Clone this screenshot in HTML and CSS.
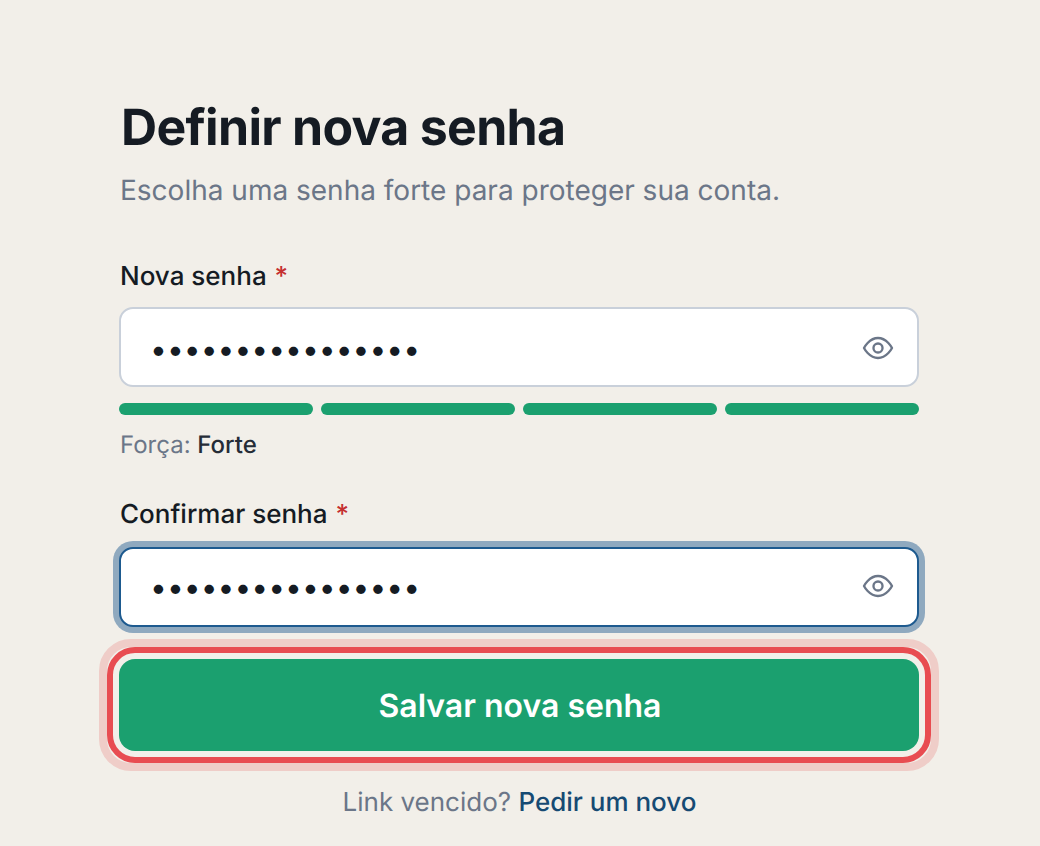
FILE: index.html
```html
<!DOCTYPE html>
<html lang="pt-BR">
<head>
<meta charset="utf-8">
<title>Definir nova senha</title>
<link rel="stylesheet" href="styles.css">
</head>
<body>
<main class="card">
  <h1 class="title">Definir nova senha</h1>
  <p class="subtitle">Escolha uma senha forte para proteger sua conta.</p>
  <form class="form">
    <div class="field field-first">
      <label class="label" for="nova">Nova senha <span class="req">*</span></label>
      <div class="input-wrap">
        <input class="input input-rest" id="nova" type="password" value="abcdefghijklmnop">
        <button class="eye eye-rest" type="button" aria-label="Mostrar senha">
          <svg viewBox="0 0 24 24" width="32" height="32" fill="none" stroke="currentColor" stroke-width="1.75" stroke-linecap="round" stroke-linejoin="round"><path d="M1.5 12s3.8-7.5 10.5-7.5 10.5 7.5 10.5 7.5-3.8 7.5-10.5 7.5S1.5 12 1.5 12z"/><circle cx="12" cy="12" r="3.4"/></svg>
        </button>
      </div>
      <div class="meter"><span></span><span></span><span></span><span></span></div>
      <p class="strength">Força: <strong>Forte</strong></p>
    </div>
    <div class="field field-second">
      <label class="label label-second" for="conf">Confirmar senha <span class="req">*</span></label>
      <div class="input-wrap">
        <input class="input input-focus" id="conf" type="password" value="abcdefghijklmnop">
        <button class="eye eye-focus" type="button" aria-label="Mostrar senha">
          <svg viewBox="0 0 24 24" width="32" height="32" fill="none" stroke="currentColor" stroke-width="1.75" stroke-linecap="round" stroke-linejoin="round"><path d="M1.5 12s3.8-7.5 10.5-7.5 10.5 7.5 10.5 7.5-3.8 7.5-10.5 7.5S1.5 12 1.5 12z"/><circle cx="12" cy="12" r="3.4"/></svg>
        </button>
      </div>
    </div>
    <button class="submit" type="button">Salvar nova senha</button>
  </form>
  <p class="foot">Link vencido? <a href="#">Pedir um novo</a></p>
</main>
</body>
</html>
```

FILE: styles.css
```css
* { box-sizing: border-box; }
html, body { margin: 0; height: 100%; }
body {
  background: #f2efe9;
  color: #151b23;
  font-family: Inter, "Liberation Sans", sans-serif;
  text-rendering: geometricPrecision;
  overflow: hidden;
}
.card { width: 800px; margin-left: 119px; padding-top: 98px; }
.title {
  margin: 0;
  padding-left: 2px;
  font-size: 50px;
  line-height: 60px;
  font-weight: 700;
  letter-spacing: -0.7px;
  color: #151b23;
}
.subtitle {
  margin: 14px 0 0;
  padding-left: 1px;
  font-size: 28px;
  line-height: 36px;
  color: #6b7688;
}
.form { display: flex; flex-direction: column; }
.field-first { margin-top: 52px; }
.field-second { margin-top: 37px; }
.label {
  display: block;
  padding-left: 1px;
  font-size: 26px;
  line-height: 34px;
  font-weight: 450;
  margin-bottom: 13px;
}
.label-second { margin-bottom: 15px; }
.req { color: #c53030; margin-left: 1px; }
.input-wrap { position: relative; }
.input {
  display: block;
  width: 100%;
  height: 80px;
  padding: 0 80px 0 29px;
  background: #fff;
  border: 2px solid #c9d0da;
  border-radius: 14px;
  font-family: Inter, sans-serif;
  font-size: 30px;
  color: #151b23;
  outline: none;
}
.input-rest { padding-top: 4px; }
.input-focus {
  border-color: #1d5a8f;
  box-shadow: 0 0 0 6px #8fa9bf;
}
.eye {
  position: absolute;
  right: 25px;
  padding: 0;
  border: 0;
  background: none;
  color: #6b7688;
  display: flex;
}
.eye-rest { top: 25px; }
.eye-focus { top: 23px; }
.meter {
  display: grid;
  grid-template-columns: repeat(4, 1fr);
  gap: 8px;
  margin-top: 16px;
}
.meter span { height: 12px; border-radius: 6px; background: #1ba06f; }
.strength {
  margin: 14px 0 0;
  padding-left: 1px;
  font-size: 24px;
  line-height: 32px;
  color: #6b7688;
}
.strength strong { font-weight: 450; color: #252c37; }
.submit {
  position: relative;
  display: block;
  width: 100%;
  height: 92px;
  margin-top: 32px;
  padding: 0 0 0 2px;
  background: #1ba06f;
  color: #fff;
  border: 0;
  border-radius: 16px;
  font-family: Inter, sans-serif;
  font-size: 32px;
  font-weight: 600;
  text-rendering: geometricPrecision;
  outline: 6px solid #e84c51;
  outline-offset: 6px;
}
.submit::after {
  content: "";
  position: absolute;
  inset: -20px;
  border: 8px solid #efcdc8;
  border-radius: 32px;
  pointer-events: none;
}
.foot {
  margin: 35px 0 0;
  padding-left: 1px;
  text-align: center;
  font-size: 26px;
  line-height: 34px;
  color: #6b7688;
}
.foot a { color: #164a73; font-weight: 500; text-decoration: none; }
```
